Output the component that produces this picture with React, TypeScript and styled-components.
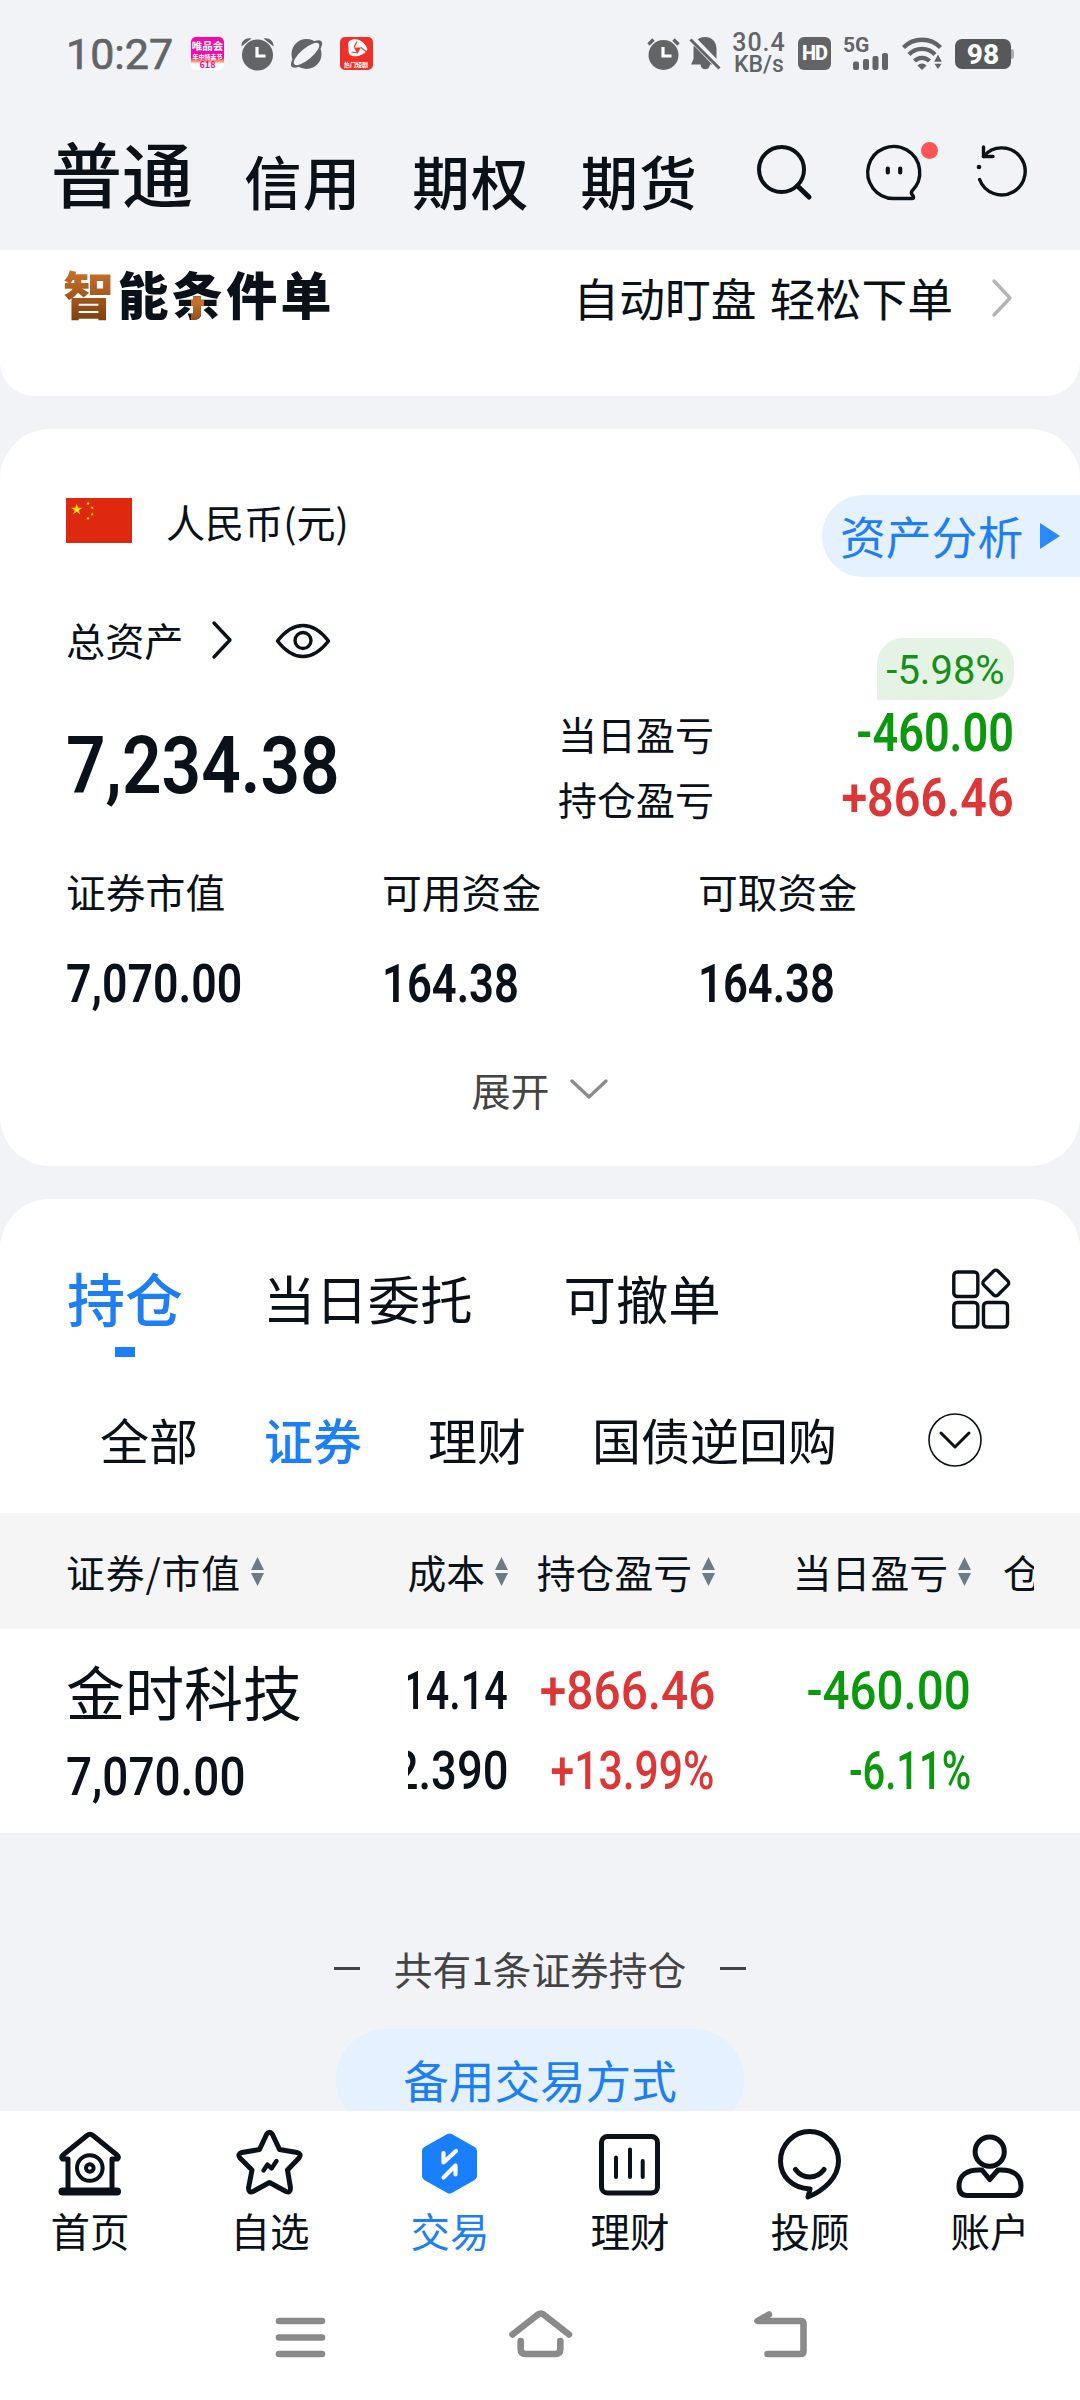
import React from 'react';
import styled, { createGlobalStyle, css } from 'styled-components';

const INK = '#0a1118';
const BLUE = '#1e7ff5';
const GREEN = '#0a980c';
const RED = '#dc3636';
const GRAY = '#636466';
const PAGE = '#f2f3f7';
const CJK = "'Noto Sans CJK SC', 'Noto Sans', sans-serif";
const NUM = "Roboto, 'Noto Sans', sans-serif";

const GlobalStyle = createGlobalStyle`
  * { box-sizing: border-box; }
  html, body { margin: 0; padding: 0; }
  body { background: ${PAGE}; font-family: ${CJK}; color: ${INK}; }
  svg { display: block; flex: none; overflow: visible; }
`;

const Screen = styled.div`
  width: 1080px;
  height: 2400px;
  display: flex;
  flex-direction: column;
  overflow: hidden;
  background: ${PAGE};
  white-space: nowrap;
`;

/* ---------- status bar ---------- */

const StatusBar = styled.div`
  height: 107px;
  flex: none;
  display: flex;
  align-items: center;
  padding: 0 66px 0 66px;
  color: ${GRAY};
  font-family: ${NUM};
`;

const Clock = styled.span`
  width: 125px;
  font-size: 43px;
  line-height: 50px;
  -webkit-text-stroke: 0.7px ${GRAY};
`;

const Notifications = styled.div`
  display: flex;
  gap: 16.5px;
`;

const AppBadge = styled.div<{ $bg: string }>`
  width: 33px;
  height: 33px;
  border-radius: 5px;
  overflow: hidden;
  background: ${p => p.$bg};
  display: flex;
  flex-direction: column;
  align-items: center;
  color: #fff;
  font-family: ${CJK};
`;

const BadgeText = styled.span<{ $size: number; $color?: string; $lh: number }>`
  font-size: ${p => p.$size}px;
  line-height: ${p => p.$lh}px;
  font-weight: 700;
  color: ${p => p.$color || '#fff'};
`;

const SystemStatus = styled.div`
  margin-left: auto;
  display: flex;
  align-items: center;
`;

const NetSpeed = styled.div`
  width: 60px;
  margin-left: 9px;
  display: flex;
  flex-direction: column;
  align-items: center;
  font-weight: 500;
  font-size: 25px;
  line-height: 22px;
  letter-spacing: 1px;
`;

const SpeedUnit = styled.span`
  font-size: 23px;
  letter-spacing: 0;
`;

const HdBadge = styled.div`
  width: 33px;
  height: 33px;
  margin-left: 9px;
  border-radius: 6px;
  background: ${GRAY};
  color: #fff;
  font-size: 20px;
  line-height: 33px;
  font-weight: 800;
  text-align: center;
  letter-spacing: -1px;
`;

const SignalBox = styled.div`
  width: 46px;
  height: 33px;
  margin-left: 12px;
  display: flex;
  flex-direction: column;
  font-size: 21px;
  line-height: 16px;
  font-weight: 700;
`;

const WifiBox = styled.div`
  margin-left: 13px;
`;

const Battery = styled.div`
  width: 56px;
  height: 30px;
  margin-left: 13px;
  border-radius: 7px;
  background: #57585a;
  color: #fff;
  font-size: 28px;
  line-height: 31px;
  font-weight: 800;
  text-align: center;
`;

const BatteryTip = styled.div`
  width: 3px;
  height: 10px;
  border-radius: 0 3px 3px 0;
  background: #a9aaac;
`;

/* ---------- page header ---------- */

const Header = styled.header`
  height: 143px;
  flex: none;
  display: flex;
  align-items: center;
  padding: 0 51px 14px 51px;
`;

const MainTab = styled.span<{ $active?: boolean }>`
  font-weight: 500;
  ${p =>
    p.$active
      ? css`
          width: 193px;
          font-size: 71px;
          line-height: 100px;
          margin-top: -2px;
        `
      : css`
          width: 168.3px;
          font-size: 57.5px;
          line-height: 80px;
          letter-spacing: 1.2px;
          padding-top: 17px;
        `}
`;

const HeaderIcons = styled.div`
  margin-left: auto;
  display: flex;
  gap: 51px;
`;

const IconHolder = styled.div`
  position: relative;
`;

const UnreadDot = styled.i`
  position: absolute;
  top: -1px;
  left: 57px;
  width: 17px;
  height: 17px;
  border-radius: 50%;
  background: #fa5454;
`;

/* ---------- promo strip ---------- */

const Promo = styled.section`
  height: 146px;
  flex: none;
  display: flex;
  align-items: flex-start;
  padding: 18px 68px 0 63px;
  background: #fff;
  border-radius: 0 0 34px 34px;
`;

const PromoTitle = styled.h2`
  margin: 0;
  font-size: 51px;
  line-height: 50px;
  font-weight: 900;
  letter-spacing: 3.4px;
`;

const CopperChar = styled.span`
  color: transparent;
  background: linear-gradient(#c8702a 20%, #7c3f10 90%);
  -webkit-background-clip: text;
  background-clip: text;
`;

const AccentChar = styled.span`
  color: transparent;
  background: linear-gradient(#c8702a 20%, #8a4a12 80%) 19px 40px / 13px 34px no-repeat,
    linear-gradient(${INK}, ${INK});
  -webkit-background-clip: text;
  background-clip: text;
`;

const PromoLink = styled.span`
  margin-left: auto;
  margin-right: 39px;
  font-size: 45.8px;
  line-height: 58px;
  word-spacing: 3px;
`;

const PromoArrow = styled.div`
  padding-top: 11px;
`;

/* ---------- assets card ---------- */

const AssetCard = styled.section`
  height: 737px;
  flex: none;
  margin-top: 33px;
  padding-top: 66px;
  background: #fff;
  border-radius: 50px;
`;

const CurrencyRow = styled.div`
  display: flex;
  justify-content: space-between;
  height: 82px;
  padding-left: 66px;
`;

const Currency = styled.div`
  display: flex;
  align-items: center;
  gap: 34px;
  height: 51px;
  font-size: 39.1px;
`;

const AnalysisButton = styled.div`
  width: 258px;
  height: 82px;
  display: flex;
  align-items: center;
  gap: 16.5px;
  padding-left: 18px;
  border-radius: 41px 0 0 41px;
  background: #e5f1fe;
  color: ${BLUE};
  font-size: 45.8px;
  line-height: 79px;
`;

const ButtonLabel = styled.span`
  margin-top: -2px;
`;

const Summary = styled.div`
  display: flex;
  justify-content: space-between;
  padding: 0 66px;
`;

const TotalColumn = styled.div`
  padding-top: 39px;
`;

const TotalLabel = styled.div`
  display: flex;
  align-items: center;
  height: 46px;
  font-size: 39.2px;
`;

const LabelIcon = styled.div<{ $gap: number; $drop?: number }>`
  margin-left: ${p => p.$gap}px;
  padding-top: ${p => p.$drop || 0}px;
`;

const Value = styled.span<{
  $size: number;
  $stretch: number;
  $lh?: number;
  $color?: string;
  $weight?: number;
  $end?: boolean;
}>`
  display: block;
  font-family: ${NUM};
  font-size: ${p => p.$size}px;
  line-height: ${p => p.$lh || 60}px;
  font-weight: ${p => p.$weight || 500};
  color: ${p => p.$color || INK};
  transform: scaleX(${p => p.$stretch});
  transform-origin: ${p => (p.$end ? 'right' : 'left')} center;
`;

const TotalValue = styled.div`
  margin-top: 56px;
  height: 96px;
`;

const ProfitColumn = styled.div`
  width: 456px;
  display: flex;
  flex-direction: column;
  padding-top: 61px;
`;

const PercentBadge = styled.span`
  align-self: flex-end;
  width: 137px;
  height: 62px;
  border-radius: 26px 26px 26px 0;
  background: #e5f3e5;
  color: #16901a;
  font-family: ${NUM};
  font-size: 40px;
  line-height: 66px;
  text-align: center;
`;

const ProfitRow = styled.div`
  display: flex;
  align-items: center;
  justify-content: space-between;
  height: 65.5px;
  font-size: 39px;
  line-height: 56px;
`;

const Stats = styled.div`
  display: grid;
  grid-template-columns: repeat(3, 316px);
  padding: 35px 0 0 66px;
`;

const StatLabel = styled.div`
  height: 50px;
  margin-bottom: 38px;
  font-size: 39.8px;
  line-height: 50px;
`;

const Expand = styled.div`
  display: flex;
  align-items: center;
  justify-content: center;
  gap: 20px;
  height: 44px;
  margin-top: 53px;
  padding-right: 1px;
  color: #444;
  font-size: 39px;
`;

/* ---------- holdings card ---------- */

const HoldingsCard = styled.section`
  height: 636px;
  flex: none;
  margin-top: 33px;
  padding-top: 58px;
  background: #fff;
  border-radius: 50px 50px 0 0;
  border-bottom: 2px solid #edf0ef;
`;

const Tabs = styled.div`
  display: flex;
  height: 100px;
  padding-left: 67px;
`;

const Tab = styled.div<{ $active?: boolean; $gap?: number }>`
  display: flex;
  flex-direction: column;
  align-items: center;
  margin-left: ${p => p.$gap || 0}px;
  font-size: ${p => (p.$active ? 58 : 52.4)}px;
  font-weight: ${p => (p.$active ? 500 : 400)};
  color: ${p => (p.$active ? BLUE : INK)};
  line-height: 80px;
`;

const TabMark = styled.i`
  width: 20px;
  height: 10px;
  margin-top: 10px;
  background: #1a7fff;
`;

const TabMenu = styled.div`
  margin: 10px 68px 0 auto;
`;

const SubTabs = styled.div`
  display: flex;
  align-items: center;
  height: 60px;
  margin: 52px 0 44px;
  padding: 0 98px 0 100px;
  gap: 66px;
`;

const SubTab = styled.span<{ $active?: boolean }>`
  font-size: 49px;
  line-height: 60px;
  font-weight: ${p => (p.$active ? 500 : 400)};
  color: ${p => (p.$active ? BLUE : INK)};
`;

const SubTabMore = styled.div`
  margin-left: auto;
  padding-top: 2px;
`;

const TableRow = styled.div<{ $head?: boolean }>`
  display: flex;
  height: ${p => (p.$head ? 116 : 204)}px;
  ${p =>
    p.$head &&
    css`
      align-items: center;
      background: #f5f5f5;
      font-size: 38.8px;
      line-height: 56px;
    `}
`;

const NameCell = styled.div`
  width: 408px;
  flex: none;
  padding-left: 66px;
`;

const ScrollCells = styled.div`
  width: 626px;
  display: flex;
  overflow: hidden;
`;

const Cell = styled.div<{ $w: number; $pad?: number }>`
  width: ${p => p.$w}px;
  flex: none;
  padding-right: ${p => p.$pad || 0}px;
  display: flex;
  flex-direction: column;
  align-items: flex-end;
`;

const LastCell = styled.div`
  flex: none;
  padding-left: 32px;
`;

const HeadLabel = styled.div<{ $wide?: boolean }>`
  display: flex;
  align-items: center;
  gap: 10px;
  letter-spacing: ${p => (p.$wide ? 0.9 : 0)}px;
`;

const NameLines = styled(NameCell)`
  padding-top: 22px;
`;

const StockName = styled.div`
  height: 80px;
  margin-bottom: 16px;
  font-size: 59px;
  line-height: 80px;
`;

const DataCells = styled(ScrollCells)`
  padding-top: 32px;
`;

const DataCell = styled(Cell)`
  gap: 19.5px;
`;

/* ---------- list footer ---------- */

const ListFooter = styled.div`
  flex: 1;
  min-height: 0;
  overflow: hidden;
  display: flex;
  flex-direction: column;
  align-items: center;
  padding-top: 108px;
`;

const CountLine = styled.div`
  display: flex;
  flex: none;
  align-items: center;
  gap: 34px;
  height: 50px;
  color: #444;
  font-size: 38.7px;
  line-height: 56px;
`;

const Dash = styled.i`
  width: 26px;
  height: 3px;
  background: #444;
`;

const BackupButton = styled.div`
  flex: none;
  width: 408px;
  height: 100px;
  margin-top: 36px;
  border-radius: 50px;
  background: #e5f1fe;
  color: ${BLUE};
  font-size: 45.6px;
  line-height: 100px;
  text-align: center;
`;

/* ---------- bottom bars ---------- */

const BottomNav = styled.nav`
  flex: none;
  height: 169px;
  display: grid;
  grid-template-columns: repeat(6, 180px);
  padding-top: 13px;
  background: #fff;
`;

const NavItem = styled.div<{ $active?: boolean }>`
  display: flex;
  flex-direction: column;
  align-items: center;
  font-size: 39.5px;
  line-height: 52px;
  color: ${p => (p.$active ? BLUE : INK)};
`;

const SystemNav = styled.div`
  flex: none;
  height: 120px;
  display: flex;
  justify-content: center;
  gap: 160px;
  padding-top: 25px;
  background: #fff;
`;

/* ---------- icons ---------- */

const line = {
  fill: 'none',
  stroke: 'currentColor',
  strokeLinecap: 'round' as const,
  strokeLinejoin: 'round' as const,
};

const AlarmIcon = ({ small }: { small?: boolean }) => (
  <svg width="33" height="33" viewBox="0 0 33 33">
    <circle cx="16.5" cy="18" r={small ? 15 : 15.5} fill={GRAY} />
    {small ? (
      <path d="M1.5 7.5 6.5 2.5M31.5 7.5l-5-5" stroke={GRAY} strokeWidth="3.4" />
    ) : (
      <path d="M.5 9.5C0 4 5 0 10.500 1.500ZM32.500 9.500C33 4 28 0 22.500 1.500Z" fill={GRAY} />
    )}
    <path d="M16 10v9h8.500" fill="none" stroke="#fff" strokeWidth="3.2" />
  </svg>
);

const PlanetIcon = () => (
  <svg width="33" height="33" viewBox="0 0 33 33">
    <circle cx="16.500" cy="17" r="15" fill={GRAY} />
    <ellipse cx="16.500" cy="17" rx="19.500" ry="7" transform="rotate(-40 16.500 17)" fill={GRAY} />
    <ellipse cx="16.500" cy="17" rx="16" ry="5.600" transform="rotate(-40 16.500 17)" fill={PAGE} />
  </svg>
);

const PlayIcon = () => (
  <svg width="33" height="23" viewBox="0 0 33 23">
    <path d="M9.500 4c4-3 11-2 15 3 2 3 4 5 2 7-3 4-9 6-14 5-4-1-4-4-4-7 0-4-1-6 1-8Z" fill="#fff" />
    <path d="M14 10.500h7L17.500 17Z" fill="#ef3a2d" />
    <path d="M14 10.500l3-6M21 10.500l5 4M17.500 16l-6-1" stroke="#ef3a2d" strokeWidth="1.200" />
  </svg>
);

const MutedIcon = () => (
  <svg width="30" height="35" viewBox="0 0 30 35">
    <path d="M15 1C7 1 3.500 7 3.500 13v10L1 28.500h9.500a4.800 5.500 0 0 0 9.500 0h8L26.500 23V13C26.500 7 23 1 15 1Z" fill={GRAY} />
    <path d="M1 1.500 29.500 31" stroke={PAGE} strokeWidth="7" />
    <path d="M.5 3.500 29.500 32.500" stroke={GRAY} strokeWidth="3" />
  </svg>
);

const SignalIcon = () => (
  <svg width="46" height="17" viewBox="0 0 46 17">
    <g fill={GRAY}>
      <rect x="10" y="8.500" width="6" height="8.500" rx="2" />
      <rect x="20" y="6" width="6" height="11" rx="2" />
      <rect x="29.500" y="3" width="6" height="14" rx="2" />
      <rect x="39" y="0" width="6" height="17" rx="2" />
    </g>
  </svg>
);

const WifiIcon = () => (
  <svg width="40" height="33" viewBox="0 0 40 33">
    <g fill="none" stroke={GRAY} strokeWidth="4.300">
      <path d="M1.500 10.500a26 26 0 0 1 37 0" />
      <path d="M7 17.500a18 18 0 0 1 26 0" />
      <path d="M12.500 24a10.500 10.500 0 0 1 15 0" />
    </g>
    <path d="M15.500 28.500a6 6 0 0 1 9 0L20 33Z" fill={GRAY} />
    <path d="M31 25.500 36 16l5 9.500ZM31 26l5 7.500 5-7.500Z" fill={GRAY} stroke={PAGE} strokeWidth="1.500" />
  </svg>
);

const SearchIcon = () => (
  <svg width="58" height="58" viewBox="0 0 58 58" {...line}>
    <circle cx="26.500" cy="26.500" r="22.500" strokeWidth="4" />
    <path d="M42.500 43 54 54" strokeWidth="5" />
  </svg>
);

const ChatIcon = () => (
  <svg width="60" height="58" viewBox="0 0 60 58" {...line} strokeWidth="3.400">
    <path d="M29.500 55.500A26 26 0 1 1 48 48q-1.500 2 .5 4 2.500 3.500-.5 3.500Z" />
    <path d="M23.800 25.500v4M36.200 25.500v4" strokeWidth="4.200" />
  </svg>
);

const RefreshIcon = () => (
  <svg width="54" height="58" viewBox="0 0 54 58" {...line} strokeWidth="3.400">
    <path d="M8.500 13.500A23.500 23.500 0 1 1 4.600 36.500" />
    <path d="M8.500 4v9.500h9.500" />
    <circle cx="4" cy="24" r="2.300" fill="currentColor" stroke="none" />
  </svg>
);

const Chevron = ({ color, width = 3.4 }: { color: string; width?: number }) => (
  <svg width="20" height="38" viewBox="0 0 20 38" {...line} stroke={color} strokeWidth={width}>
    <path d="M2 2 18 19 2 36" />
  </svg>
);

const Flag = () => {
  const star = 'M0-1 .225-.309 .951-.309 .363 .118 .588 .809 0 .382-.588 .809-.363 .118-.951-.309-.225-.309Z';
  return (
    <svg width="66" height="45" viewBox="0 0 66 45">
      <rect width="66" height="45" fill="#de2910" />
      <g fill="#ffde00">
        <path d={star} transform="translate(10.700 11.500) scale(6)" />
        <path d={star} transform="translate(22 5.500) rotate(20) scale(2)" />
        <path d={star} transform="translate(26.200 9.800) rotate(45) scale(2)" />
        <path d={star} transform="translate(26.200 16.300) scale(2)" />
        <path d={star} transform="translate(22 20.500) rotate(20) scale(2)" />
      </g>
    </svg>
  );
};

const PlayTriangle = () => (
  <svg width="20" height="26" viewBox="0 0 20 26">
    <path d="M0 0 20 13 0 26Z" fill="#2b8aff" />
  </svg>
);

const EyeIcon = () => (
  <svg width="56" height="38" viewBox="0 0 56 38" {...line} strokeWidth="3.400">
    <path d="M2.500 19C11 8 19 3.500 28 3.500S45 8 53.500 19C45 30 37 34.500 28 34.500S11 30 2.500 19Z" />
    <circle cx="28" cy="18.500" r="8" />
  </svg>
);

const DownIcon = () => (
  <svg width="38" height="20" viewBox="0 0 38 20" {...line} stroke="#8c8c8c" strokeWidth="3.400">
    <path d="M2 2 19 18 36 2" />
  </svg>
);

const GridIcon = () => (
  <svg width="61" height="62" viewBox="0 0 61 62" {...line} strokeWidth="3.400">
    <rect x="2.800" y="5" width="24" height="24.500" rx="3.500" />
    <rect x="2.800" y="35.500" width="24" height="24.500" rx="3.500" />
    <rect x="32.500" y="35.500" width="24" height="24.500" rx="3.500" />
    <rect x="34.800" y="6" width="20" height="20" rx="3" transform="rotate(45 44.800 16)" />
  </svg>
);

const CircleDown = () => (
  <svg width="54" height="54" viewBox="0 0 54 54" {...line}>
    <circle cx="27" cy="27" r="26" strokeWidth="1.600" />
    <path d="M13 20 27 34 41 20" strokeWidth="3" />
  </svg>
);

const SortIcon = () => (
  <svg width="13" height="29" viewBox="0 0 13 29" fill="#6f7a88">
    <path d="M0 13 6.500 0 13 13ZM0 16H13L6.500 29Z" />
  </svg>
);

const HomeIcon = () => (
  <svg width="80" height="80" viewBox="0 0 80 80" {...line} strokeWidth="5">
    <path d="M18 35H12.500Q10.500 33.500 13 31L37 11.500q3-2.500 6 0L67 31q2.500 2.500.5 4H62M18 35V66M62 35V66" />
    <path d="M12.500 67.500H67" strokeWidth="8" />
    <circle cx="39.800" cy="44" r="12.800" strokeWidth="4" />
    <circle cx="39.800" cy="44" r="3.800" strokeWidth="4" />
  </svg>
);

const StarIcon = () => (
  <svg width="80" height="80" viewBox="0 0 80 80" {...line} strokeWidth="5">
    <path d="M36.500 10.500Q39.500 6 42.500 10.500L49.500 25.500 67 28.500Q72 30 69 34L57.500 46 60.500 64Q60.500 69.500 56 67.500L39.500 58.500 23 67.500Q18.500 69.500 18.500 64L22 46 10 34Q7 30 12 28.500L29.500 25.500Z" />
    <path d="M33.500 46.500 37.500 40.500 41.500 44.500 46.500 37" strokeWidth="4.400" />
  </svg>
);

const TradeIcon = () => (
  <svg width="80" height="80" viewBox="0 0 80 80" {...line}>
    <path d="M39.500 14 62.500 27V52L39.500 65 16.500 52V27Z" fill="#1a7fff" stroke="#1a7fff" strokeWidth="9" />
    <path d="M33.500 29v9.500L46 27M33.500 53.500 45.500 41.500V50.500" stroke="#fff" strokeWidth="4.200" />
  </svg>
);

const WealthIcon = () => (
  <svg width="80" height="80" viewBox="0 0 80 80" {...line} strokeWidth="5">
    <rect x="11.500" y="12.500" width="56" height="56.500" rx="6" />
    <path d="M26 33.500V53M40 25.500V53M52.700 37V53" strokeWidth="4" />
  </svg>
);

const AdvisorIcon = () => (
  <svg width="80" height="80" viewBox="0 0 80 80" {...line} strokeWidth="5">
    <path d="M40 65C22 64 10.500 52 10.500 37A29 29.500 0 0 1 68.500 37C68.500 54 53 67 38 73Z" />
    <path d="M25.500 45.500Q31 53 39.700 53T54 45.500" />
  </svg>
);

const AccountIcon = () => (
  <svg width="80" height="80" viewBox="0 0 80 80" {...line} strokeWidth="5">
    <circle cx="39.700" cy="27.700" r="14.600" />
    <path d="M32 46C16 45 9 52 9 62Q9 71.500 17 71.500H63Q71 71.500 71 62C71 52 64 45 48 46L39.700 55.500Z" />
  </svg>
);

const sysLine = { ...line, stroke: '#8a8a8a', strokeWidth: 6.6 };

const MenuIcon = () => (
  <svg width="80" height="60" viewBox="0 0 80 60" {...sysLine}>
    <path d="M19 16H62M19 32.500H62M19 49H62" />
  </svg>
);

const SysHomeIcon = () => (
  <svg width="80" height="60" viewBox="0 0 80 60" {...sysLine}>
    <path d="M12.500 29.500 38 9.500q2.800-2 5.500 0L69 29.500M20.700 36V44q0 5 5 5H55.300q5 0 5-5V36" />
  </svg>
);

const BackIcon = () => (
  <svg width="80" height="60" viewBox="0 0 80 60" {...sysLine}>
    <path d="M29 9.500 17.500 16H61q2.500 0 2.500 3V46q0 3-3 3H27.500" />
  </svg>
);

/* ---------- data ---------- */

const stats = [
  { label: '证券市值', value: '7,070.00', stretch: 0.842 },
  { label: '可用资金', value: '164.38', stretch: 0.822 },
  { label: '可取资金', value: '164.38', stretch: 0.822 },
];

const navItems = [
  { label: '首页', icon: <HomeIcon /> },
  { label: '自选', icon: <StarIcon /> },
  { label: '交易', icon: <TradeIcon />, active: true },
  { label: '理财', icon: <WealthIcon /> },
  { label: '投顾', icon: <AdvisorIcon /> },
  { label: '账户', icon: <AccountIcon /> },
];

const columns = [
  { title: '成本', w: 100, pad: 0, color: INK, lines: [['14.14', 0.765], ['12.390', 0.84]] },
  { title: '持仓盈亏', w: 207, pad: 0, color: RED, lines: [['+866.46', 0.885], ['+13.99%', 0.79]] },
  { title: '当日盈亏', w: 256, pad: 0, color: GREEN, lines: [['-460.00', 0.88], ['-6.11%', 0.74]] },
] as { title: string; w: number; pad: number; color: string; lines: [string, number][] }[];

export default function App() {
  return (
    <Screen>
      <GlobalStyle />
      <StatusBar>
        <Clock>10:27</Clock>
        <Notifications>
          <AppBadge $bg="linear-gradient(#f409a8 0 62%, #f98a5a 72%, #fff 82%)">
            <BadgeText $size={10.5} $lh={17}>唯品会</BadgeText>
            <BadgeText $size={6} $lh={5}>年中特卖节</BadgeText>
            <BadgeText $size={9} $lh={12} $color="#e0109a">618</BadgeText>
          </AppBadge>
          <AlarmIcon />
          <PlanetIcon />
          <AppBadge $bg="#ef2f2a">
            <PlayIcon />
            <BadgeText $size={6} $lh={9}>热门短剧</BadgeText>
          </AppBadge>
        </Notifications>
        <SystemStatus>
          <AlarmIcon small />
          <LabelIcon $gap={10}>
            <MutedIcon />
          </LabelIcon>
          <NetSpeed>
            30.4
            <SpeedUnit>KB/s</SpeedUnit>
          </NetSpeed>
          <HdBadge>HD</HdBadge>
          <SignalBox>
            5G
            <SignalIcon />
          </SignalBox>
          <WifiBox>
            <WifiIcon />
          </WifiBox>
          <Battery>98</Battery>
          <BatteryTip />
        </SystemStatus>
      </StatusBar>

      <Header>
        <MainTab $active>普通</MainTab>
        <MainTab>信用</MainTab>
        <MainTab>期权</MainTab>
        <MainTab>期货</MainTab>
        <HeaderIcons>
          <SearchIcon />
          <IconHolder>
            <ChatIcon />
            <UnreadDot />
          </IconHolder>
          <RefreshIcon />
        </HeaderIcons>
      </Header>

      <Promo>
        <PromoTitle>
          <CopperChar>智</CopperChar>能<AccentChar>条</AccentChar>件单
        </PromoTitle>
        <PromoLink>自动盯盘 轻松下单</PromoLink>
        <PromoArrow>
          <Chevron color="#b4b4b4" />
        </PromoArrow>
      </Promo>

      <AssetCard>
        <CurrencyRow>
          <Currency>
            <Flag />
            人民币(元)
          </Currency>
          <AnalysisButton>
            <ButtonLabel>资产分析</ButtonLabel>
            <PlayTriangle />
          </AnalysisButton>
        </CurrencyRow>
        <Summary>
          <TotalColumn>
            <TotalLabel>
              总资产
              <LabelIcon $gap={28} $drop={2}>
                <Chevron color={INK} />
              </LabelIcon>
              <LabelIcon $gap={43} $drop={3}>
                <EyeIcon />
              </LabelIcon>
            </TotalLabel>
            <TotalValue>
              <Value $size={80} $lh={96} $stretch={0.867} $weight={600}>7,234.38</Value>
            </TotalValue>
          </TotalColumn>
          <ProfitColumn>
            <PercentBadge>-5.98%</PercentBadge>
            <ProfitRow>
              当日盈亏
              <Value $size={53} $stretch={0.85} $weight={600} $color={GREEN} $end>-460.00</Value>
            </ProfitRow>
            <ProfitRow>
              持仓盈亏
              <Value $size={53} $lh={62} $stretch={0.88} $weight={600} $color={RED} $end>+866.46</Value>
            </ProfitRow>
          </ProfitColumn>
        </Summary>
        <Stats>
          {stats.map(s => (
            <div key={s.label}>
              <StatLabel>{s.label}</StatLabel>
              <Value $size={53} $stretch={s.stretch} $weight={600}>{s.value}</Value>
            </div>
          ))}
        </Stats>
        <Expand>
          展开
          <DownIcon />
        </Expand>
      </AssetCard>

      <HoldingsCard>
        <Tabs>
          <Tab $active>
            持仓
            <TabMark />
          </Tab>
          <Tab $gap={80}>当日委托</Tab>
          <Tab $gap={91}>可撤单</Tab>
          <TabMenu>
            <GridIcon />
          </TabMenu>
        </Tabs>
        <SubTabs>
          <SubTab>全部</SubTab>
          <SubTab $active>证券</SubTab>
          <SubTab>理财</SubTab>
          <SubTab>国债逆回购</SubTab>
          <SubTabMore>
            <CircleDown />
          </SubTabMore>
        </SubTabs>
        <TableRow $head>
          <NameCell>
            <HeadLabel $wide>
              证券/市值
              <SortIcon />
            </HeadLabel>
          </NameCell>
          <ScrollCells>
            {columns.map(c => (
              <Cell key={c.title} $w={c.w}>
                <HeadLabel>
                  {c.title}
                  <SortIcon />
                </HeadLabel>
              </Cell>
            ))}
            <LastCell>仓位</LastCell>
          </ScrollCells>
        </TableRow>
        <TableRow>
          <NameLines>
            <StockName>金时科技</StockName>
            <Value $size={54} $stretch={0.85}>7,070.00</Value>
          </NameLines>
          <DataCells>
            {columns.map(c => (
              <DataCell key={c.title} $w={c.w} $pad={c.pad}>
                {c.lines.map(([text, stretch]) => (
                  <Value key={text} $size={54} $stretch={stretch} $color={c.color} $end>
                    {text}
                  </Value>
                ))}
              </DataCell>
            ))}
          </DataCells>
        </TableRow>
      </HoldingsCard>

      <ListFooter>
        <CountLine>
          <Dash />
          共有1条证券持仓
          <Dash />
        </CountLine>
        <BackupButton>备用交易方式</BackupButton>
      </ListFooter>

      <BottomNav>
        {navItems.map(n => (
          <NavItem key={n.label} $active={n.active}>
            {n.icon}
            {n.label}
          </NavItem>
        ))}
      </BottomNav>
      <SystemNav>
        <MenuIcon />
        <SysHomeIcon />
        <BackIcon />
      </SystemNav>
    </Screen>
  );
}
